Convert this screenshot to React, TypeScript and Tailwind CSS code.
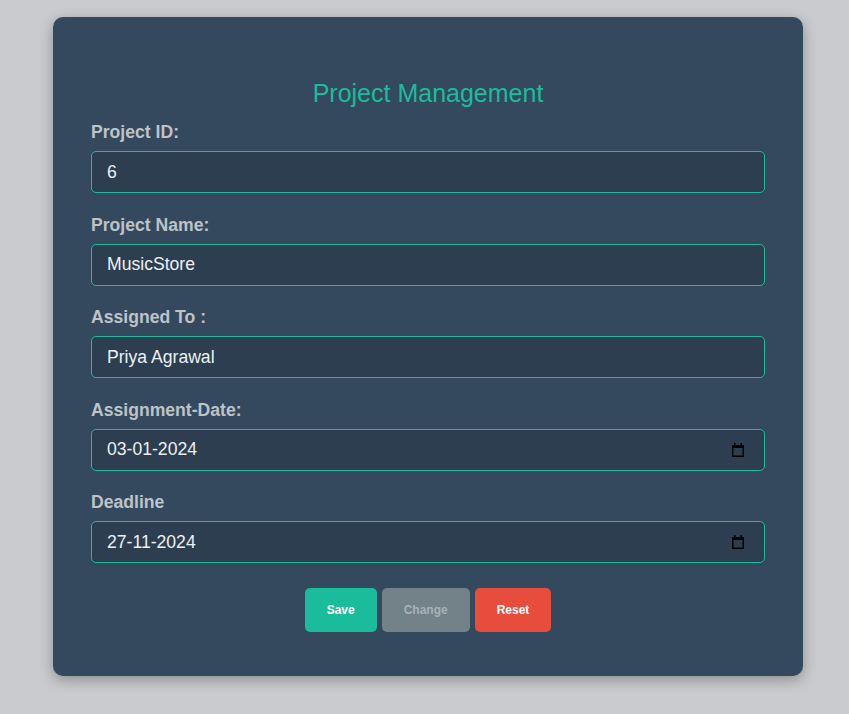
const CalendarIcon = () => (
  <svg width="12" height="14" viewBox="0 0 12 14" className="absolute right-[21px] top-1/2 -translate-y-1/2">
    <rect x="2" y="0" width="1.5" height="2.5" fill="#000" />
    <rect x="8.5" y="0" width="1.5" height="2.5" fill="#000" />
    <path d="M0 2h12v12H0z M1.5 5v7.5h9V5z" fill="#000" fillRule="evenodd" />
  </svg>
);

const fields = [
  { label: "Project ID:", value: "6" },
  { label: "Project Name:", value: "MusicStore" },
  { label: "Assigned To :", value: "Priya Agrawal" },
  { label: "Assignment-Date:", value: "03-01-2024", date: true },
  { label: "Deadline", value: "27-11-2024", date: true },
];

export default function App() {
  return (
    <div className="min-h-[714px] bg-[#c9cbce] pt-[17px] pl-[53px] font-['Liberation_Sans',Arial,sans-serif]">
      <div className="w-[750px] rounded-[10px] bg-[#34495e] px-[38px] pt-[62px] pb-[44px] shadow-[0_4px_14px_rgba(0,0,0,0.3)]">
        <h2 className="text-center text-[25px] leading-[28px] text-[#1abc9c] mb-[15px]">
          Project Management
        </h2>
        <div className="flex flex-col gap-[21.5px]">
          {fields.map((f) => (
            <div key={f.label}>
              <label className="block pt-[1px] text-[17.6px] font-bold leading-[19px] text-[#bdc3c7] mb-[9px]">
                {f.label}
              </label>
              <div className="relative">
                <input
                  readOnly
                  value={f.value}
                  className="block h-[42px] w-full rounded-[5px] border border-[#1abc9c] bg-[#2c3e50] pl-[15px] text-[17.6px] text-[#ecf0f1] outline-none"
                />
                {f.date && <CalendarIcon />}
              </div>
            </div>
          ))}
        </div>
        <div className="mt-[25px] flex justify-center gap-[5px]">
          <button className="h-[44px] rounded-[5px] bg-[#1abc9c] px-[22px] text-[12px] font-bold text-white">
            Save
          </button>
          <button disabled className="h-[44px] rounded-[5px] bg-[#738289] px-[22px] text-[12px] font-bold text-[#a9b1b7]">
            Change
          </button>
          <button className="h-[44px] rounded-[5px] bg-[#e74c3c] px-[22px] text-[12px] font-bold text-white">
            Reset
          </button>
        </div>
      </div>
    </div>
  );
}
